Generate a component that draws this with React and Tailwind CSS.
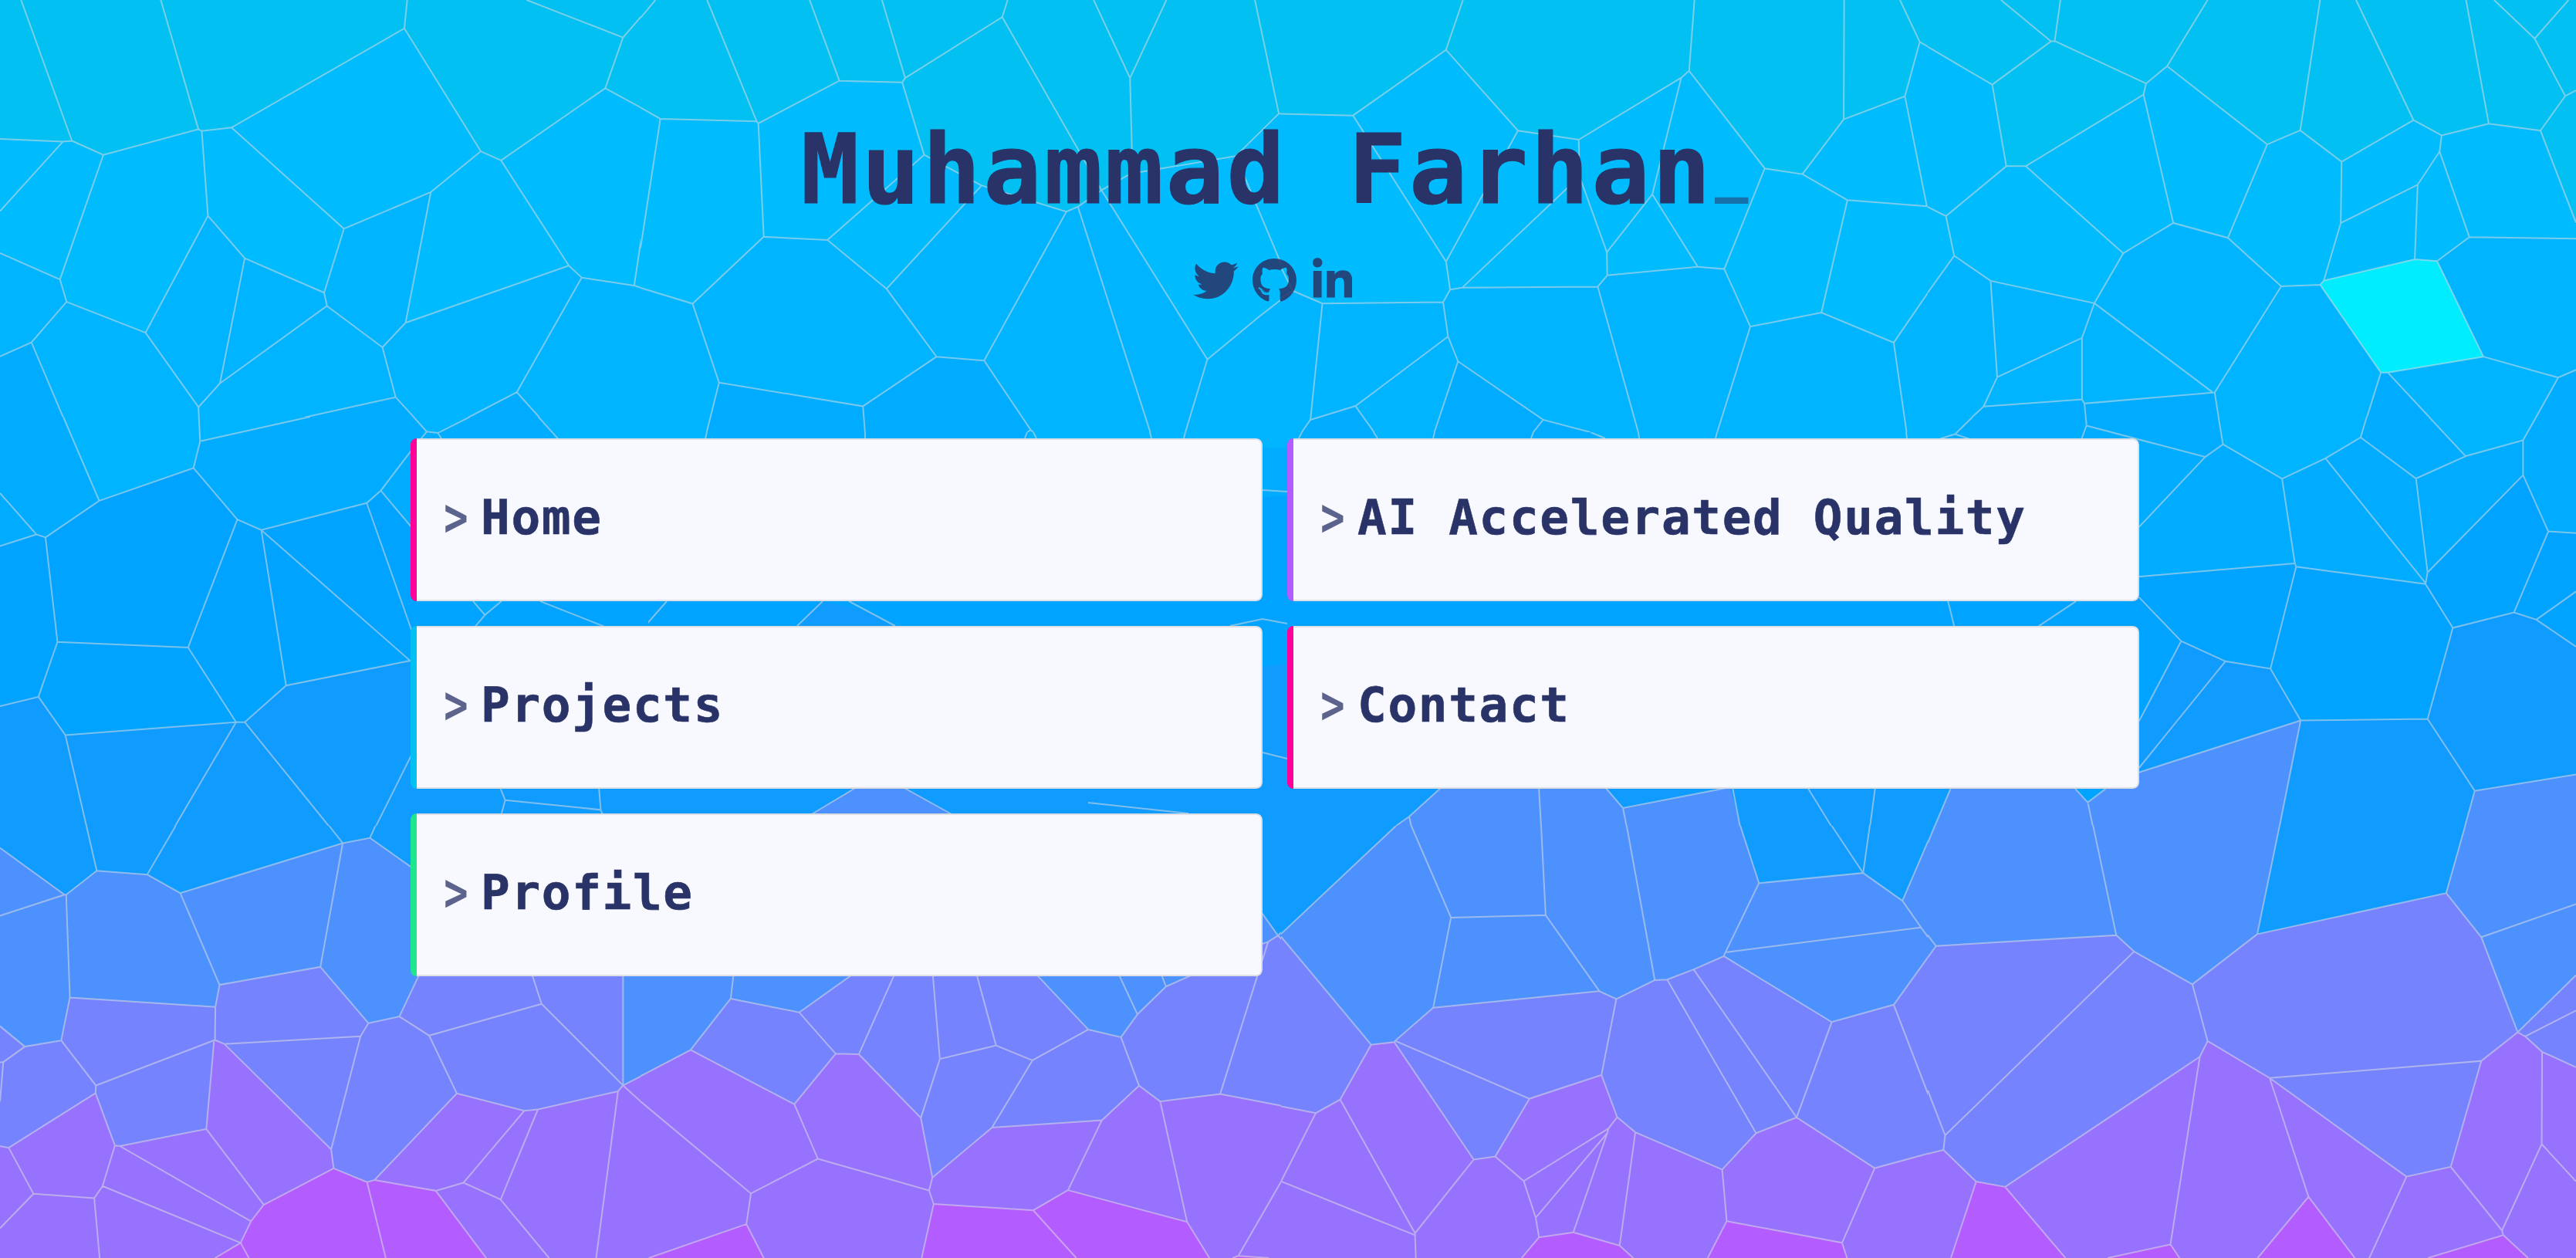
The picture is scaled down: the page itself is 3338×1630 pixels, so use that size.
import React from "react";
import { FaTwitter, FaGithub, FaLinkedinIn } from "react-icons/fa";

const C = {
  c1: "#02c0f2",
  c2: "#00bbfd",
  c3: "#00b4ff",
  c4: "#00acff",
  c5: "#00a3ff",
  c6: "#109bff",
  c7: "#4d91ff",
  c8: "#7583ff",
  c9: "#9672ff",
  c10: "#b35cff",
  hi: "#00edff",
};

// Each tile of the mosaic: position, size, base colour, coloured regions, seams.
const TILES = [
  {
    x: 830, y: 540, w: 1668, h: 540, vb: "830 540 1668 540", base: "c3",
    fills: [
      ["c4", "830 580 2498 580 2498 720 830 720"],
      ["c4", "915 540 1334 540 1334 600 915 600"],
      ["c4", "1687 540 1780 540 1790 600 1680 600"],
      ["c4", "1859 540 2061 540 2085 600 1850 600"],
      ["c5", "830 700 1700 640 2498 700 2498 1080 830 1080"],
      ["c6", "830 920 1033 811 1064 779 1120 790 1160 811 1500 880 1668 860 1668 985 2498 960 2498 1080 830 1080"],
      ["c7", "1050 1056 1105 1022 1175 1022 1235 1056"],
      ["c7", "1809 1080 1809 1070 1826 1058 1868 1020 2080 1020 2103 1047 2242 1020 2255 1070 2257 1080"],
    ],
    lines: "M916 560 914 568M1121 560 1121 568M1331 560 1328 568M1339 560 1343 568M1490 560 1492 568M1536 560 1534 568M1687 560 1683 568M1780 560 1785 568M1859 560 1857 568M1987 560 1984 568M2061 560 2080 568M2123 560 2124 568M2225 560 2223 568M2470 560 2471 568M864 779 836 811M1066 779 1033 811M1100 779 1160 811M1636 635 1668 637M1594 811 1636 802 1668 808M1636 975 1668 983M1050 1056 1110 1020M1170 1020 1235 1056M1410 1040 1540 1054M1809 1070 1826 1058 1868 1020M1826 1058 1829 1072M1994 1020 1997 1072M2080 1020 2103 1047 2242 1020M2103 1047 2108 1072M2245 1020 2255 1072M2342 1020 2374 1072M2430 1020 2423 1072",
  },
  {
    x: 0, y: 0, w: 840, h: 560, vb: "0 0 1568 1568", base: "c1",
    fills: [
      ["c2", "0 504 152 514 174 511 250 562 480 469 488 475 560 463 978 103 1163 549 1212 582 1464 320 1568 405 1568 1568 0 1568"],
      ["c3", "0 918 145 1014 161 1095 352 1207 503 783 592 937 784 1062 832 830 1042 697 981 1171 1376 964 1407 1007 1534 1036 1568 1052 1568 1568 0 1568"],
      ["c4", "0 1293 76 1242 168 1568 0 1568"],
      ["c4", "574 1568 957 1441 1032 1564 1064 1568 1250 1423 1337 1568"],
    ],
    lines: "M51 0 174 511 152 514 0 504M152 514 0 766M174 511 250 562 480 469 389 0M480 469 488 475 560 463 978 103 985 0M250 562 145 1014 0 918M145 1014 161 1095 76 1242 0 1293M76 1242 168 1568M161 1095 352 1207 503 783 488 475M352 1207 480 1477 483 1568M480 1477 532 1391 592 937 503 783M592 937 784 1062 832 830 560 463M784 1062 791 1110 532 1391M791 1110 925 1260 957 1441 574 1568M925 1260 981 1171 1042 697 832 830M1042 697 1163 549 978 103M1163 549 1212 582 1464 320 1507 136 1274 0M1507 136 1568 30M1464 320 1568 405M1212 582 1376 964 981 1171M1376 964 1407 1007 1534 1036 1568 695M1534 1036 1568 1052M1407 1007 1250 1423 1064 1568 1032 1564 957 1441M1250 1423 1337 1568",
  },
  {
    x: 830, y: 0, w: 840, h: 560, vb: "0 0 1568 1568", base: "c1",
    fills: [
      ["c2", "0 390 48 431 281 440 285 448 481 293 633 299 686 562 825 673 1030 768 1058 750 1115 690 1186 630 1400 574 1440 566 1544 412 1568 412 1568 1568 0 1568"],
      ["c3", "0 1044 126 1102 298 859 452 871 595 1048 825 673 1030 768 1058 750 1115 690 1371 1304 1568 1064 1568 1568 0 1568"],
      ["c4", "160 1568 190 1388 538 1474 716 1294 831 1308 944 1560 935 1568"],
    ],
    lines: "M0 65 36 0M161 0 281 440 48 431 0 390M48 431 0 900M281 440 285 448 481 293 409 0M481 293 633 299 640 283 584 0M640 283 875 62 888 0M875 62 1115 690M633 299 686 562 452 871 298 859 285 448M298 859 126 1102 0 1044M126 1102 190 1388 160 1568M190 1388 538 1474 543 1568M538 1474 716 1294 595 1048 452 871M716 1294 831 1308 1030 768 825 673 595 1048M686 562 825 673M831 1308 944 1560 935 1568M944 1560 950 1568M1030 768 1058 750 1233 1568M1058 750 1115 690 1371 1304 1318 1568M1115 690 1186 630 1440 566 1544 412 1568 412M1190 628 1184 283 1096 0M1184 283 1272 0M1544 412 1486 0M1440 566 1577 1055M1371 1304 1497 1148 1577 1055",
  },
  {
    x: 1660, y: 0, w: 840, h: 560, vb: "0 0 1568 1568", base: "c1",
    fills: [
      ["c2", "0 413 174 419 399 181 573 474 720 507 968 282 987 257 1170 611 1261 632 1361 433 1509 349 1545 152 1568 172 1568 1568 0 1568"],
      ["c3", "0 1082 28 1055 100 1101 392 1096 409 1051 438 1044 766 1040 789 999 1008 968 1072 976 1135 1185 1307 1134 1482 1243 1568 1060 1568 1568 0 1568"],
      ["c4", "50 1568 71 1523 180 1473 225 1568"],
      ["c4", "371 1568 428 1311 634 1523 748 1568"],
    ],
    lines: "M0 413 174 419 399 181 440 0M399 181 573 474 720 507 968 282 987 257 1000 0M987 257 1170 611 1261 632 1361 433 1362 0M1361 433 1509 349 1545 152 1497 0M1545 152 1568 172M174 419 399 949 409 1051 392 1096 404 1221 428 1311 634 1523 748 1568M573 474 399 949M438 1044 722 640 720 507M722 640 788 915 789 999 766 1040 438 1044 409 1051M968 282 898 705 788 915M898 705 1008 968 789 999M1008 968 1072 976 1170 611M1261 632 1370 726 1307 1134M1370 726 1562 748 1568 753M1509 349 1562 748M1072 976 1135 1185 1307 1134 1482 1243 1568 1055M0 970 28 1055 0 1082M28 1055 100 1101 392 1096M100 1101 71 1523 50 1568M404 1221 180 1473 71 1523M180 1473 225 1568M428 1311 371 1568M634 1523 610 1568M766 1040 864 1568M1135 1185 1055 1568M1482 1243 1513 1568",
  },
  {
    x: 2498, y: 0, w: 840, h: 560, vb: "0 0 1568 1568", base: "c1",
    fills: [
      ["c2", "0 170 156 307 190 603 237 603 522 343 528 303 579 240 821 524 901 473 1001 587 1175 436 1243 491 1357 449 1482 474 1568 808 1568 1568 0 1568"],
      ["c3", "0 1062 64 928 152 1019 403 1100 473 919 594 809 726 863 855 1039 949 1033 958 1018 1178 941 1232 947 1310 860 1568 866 1568 1568 0 1568"],
      ["c4", "68 1568 135 1475 373 1449 379 1464 694 1424 709 1568"],
      ["c4", "1051 1568 1096 1352 1113 1352 1247 1568"],
      ["c4", "1451 1568 1525 1370 1568 1342 1568 1568"],
      ["hi", "949 1033 958 1018 1178 941 1232 947 1344 1294 1113 1352 1096 1352"],
    ],
    lines: "M0 170 156 307 190 603 237 603 522 343 528 303 579 240 821 524 901 473 1001 587 1175 436 1243 491 1357 449 1482 474 1568 808M177 0 298 150 307 149 321 0M298 150 156 307M307 149 528 303M579 240 677 0M901 473 949 0M1036 0 1175 436M1302 0 1357 449M1370 0 1468 140 1550 0M1468 140 1542 348 1482 474M1542 348 1568 328M0 751 44 784 190 603M44 784 64 928M237 603 473 919M522 343 594 809M821 524 726 863M1001 587 999 809 958 1018M999 809 1185 670 1178 941M1185 670 1238 550 1243 491M1238 550 1310 860M0 1062 64 928 152 1019 403 1100 473 919 594 809 726 863 855 1039 949 1033 958 1018 1178 941 1232 947 1310 860 1568 866M152 1019 168 1368 135 1475M403 1100 373 1226 168 1368M373 1226 373 1449M403 1100 688 1422M855 1039 694 1424M68 1568 135 1475 373 1449 379 1464 694 1424 709 1568M379 1464 384 1543 452 1568M384 1543 377 1568M949 1033 1096 1352 1113 1352 1344 1294 1232 947M1096 1352 1051 1568M1113 1352 1247 1568M1344 1294 1525 1370 1568 1342M1525 1370 1451 1568",
  },
  {
    x: 0, y: 540, w: 840, h: 560, vb: "0 0 1568 1568", base: "c4",
    fills: [
      ["c3", "153 0 240 305 468 186 484 89 750 0"],
      ["c3", "1000 0 1032 54 1059 59 1137 0"],
      ["c3", "1302 0 1350 80 1568 80 1568 0"],
      ["c5", "0 469 88 427 110 438 240 305 468 186 574 373 632 411 887 313 921 268 995 400 1568 400 1568 1568 0 1568"],
      ["c4", "1144 669 1173 719 1213 669"],
      ["c6", "0 1050 93 1016 158 1155 571 1108 592 1108 692 975 992 885 1568 900 1568 1568 0 1568"],
      ["c7", "790 1568 829 1547 895 1528 934 1568"],
    ],
    lines: "M153 0 240 305 110 438 88 427 0 277M88 427 0 469M481 0 484 89 468 186 240 305M484 89 750 0M468 186 574 373 632 411 887 313 921 268 995 122M1000 0 1032 54 1059 59 1137 0M1032 54 1018 80M1059 59 1068 80M1302 0 1350 80M921 268 995 400M887 313 995 772M632 411 992 885 692 975 632 411M574 373 455 837 139 817 110 438M139 817 93 1016 0 1050M93 1016 158 1155 222 1568M158 1155 571 1108 455 837M571 1108 592 1108 692 975M571 1108 391 1568M592 1108 829 1547 790 1568M829 1547 827 1568M829 1547 895 1528 995 1228M895 1528 934 1568M1144 669 1173 719 1213 669M1173 719 1150 760M1306 669 1460 760M1211 1350 1222 1391 1213 1440M1222 1391 1453 1426 1449 1350M1453 1426 1457 1440",
  },
  {
    x: 2498, y: 540, w: 840, h: 560, vb: "0 0 1568 1568", base: "c4",
    fills: [
      ["c3", "0 0 109 0 66 63 30 80 0 80"],
      ["c3", "703 0 714 100 857 225 962 151 1047 75 1062 0"],
      ["c3", "1212 0 1301 143 1440 85 1472 0"],
      ["c5", "0 580 511 580 888 532 891 544 1204 607 1209 565 1440 212 1501 416 1568 422 1568 1568 0 1568"],
      ["c6", "511 1105 613 814 720 887 829 914 902 1102 1209 1096 1270 766 1418 710 1472 736 1568 834 1568 1568 511 1568"],
      ["c6", "0 1340 60 1340 0 1560"],
      ["c7", "0 1545 58 1340 352 1340 387 1399 440 1340 511 1290 902 1102 840 1568 0 1568"],
      ["c7", "1323 1357 1568 1298 1568 1568 1284 1568"],
    ],
    lines: "M109 0 66 63 30 80M66 63 100 80M382 0 384 32 372 80M384 32 671 146 511 400M671 146 714 100 703 0M714 100 857 225 962 151 1047 75 1062 0M962 151 1204 603M1047 75 1181 224 1301 143 1212 0M1301 143 1440 85 1472 0M1440 85 1440 212 1209 565 1181 224M1209 565 1204 607 1270 766 1418 710 1472 736 1568 834M1472 736 1568 634M1418 710 1501 416 1568 422M1501 416 1440 212M857 225 888 532 891 544 1204 607M511 580 888 532M891 544 829 914 720 887 613 814 511 655M613 814 511 1105M720 887 511 1274M829 914 902 1102 1209 1096 1270 766M1209 1096 1323 1357 1568 1298M1323 1357 1284 1568M902 1102 840 1568M902 1102 511 1290M49 669 64 760M359 669 268 760M55 1350 0 1545M357 1350 387 1399 430 1350M387 1399 411 1568",
  },
  {
    x: 0, y: 1070, w: 840, h: 560, vb: "0 0 1568 1568", base: "c7",
    fills: [
      ["c6", "0 80 160 250 234 163 356 177 436 244 829 63 895 44 995 150 995 0 0 0"],
      ["c8", "0 727 60 801 148 779 169 623 521 657 531 577 775 512 891 716 966 692 1016 530 1507 530 1507 942 1568 895 1568 1568 0 1568"],
      ["c9", "0 1162 21 1168 231 970 278 1160 290 1162 499 1100 518 777 543 792 801 1174 807 1243 888 1293 906 1285 1105 971 1268 1034 1301 1029 1495 963 1507 942 1568 895 1568 1568 0 1568"],
      ["c10", "520 1568 582 1513 607 1435 638 1375 807 1243 888 1293 906 1285 1054 1324 1176 1568"],
    ],
    lines: "M0 80 156 250 0 326M156 250 160 250 234 163 209 0M234 163 356 177 425 0M356 177 436 244 829 63 796 0M829 63 895 44 908 0M895 44 995 150M829 63 775 512 531 577 436 244M160 250 169 623 521 657 531 577M169 623 148 779 60 801 0 727M60 801 8 857 0 1000M8 857 0 858M148 779 232 942 520 777 521 657M232 942 231 970 21 1168 0 1162M21 1168 81 1335 0 1460M81 1335 228 1351 248 1307 278 1160 231 970M228 1351 241 1568M248 1307 582 1513 520 1568M582 1513 602 1568M278 1160 290 1162 499 1100 518 777M520 777 543 792 872 764 891 716 775 512M290 1162 607 1435 582 1513M499 1100 638 1375 607 1435M543 792 801 1174 872 764M801 1174 807 1243 638 1375M807 1243 888 1293 906 1285 1105 971 1038 761 966 692 891 716M966 692 1014 540M1038 761 1310 646 1287 540M1310 646 1507 942 1507 540M1507 942 1568 895M1507 942 1568 1025M1507 942 1495 963 1442 1568M1495 963 1301 1029 1268 1034 1105 971M1301 1029 1211 1356 1121 1295 1268 1034M1121 1295 1054 1324 906 1285M1054 1324 1176 1568M1211 1356 1328 1568M888 1293 933 1568",
  },
  {
    x: 830, y: 1070, w: 840, h: 560, vb: "0 0 1568 1568", base: "c8",
    fills: [
      ["c7", "0 908 121 813 218 627 384 677 521 530 0 530"],
      ["c7", "950 530 1083 739 1162 767 1202 684 1271 583 1350 530"],
      ["c6", "1490 0 1568 0 1568 360 1542 398 1505 320 1490 320"],
      ["c7", "1490 300 1505 320 1542 398 1490 440"],
      ["c7", "1542 398 1568 360 1568 442"],
      ["c9", "0 908 121 813 372 1010 472 827 528 829 678 1060 706 1276 850 1095 1116 1068 1206 943 1257 1000 1402 973 1568 1021 1568 1568 0 1568"],
      ["c10", "20 1568 256 1445 298 1568"],
      ["c10", "680 1568 709 1372 950 1395 1034 1322 1322 1437 1376 1568"],
      ["c10", "1432 1568 1446 1560 1520 1568"],
    ],
    lines: "M0 908 121 813 218 627 225 540M218 627 384 677 512 540M384 677 472 827 528 829 614 540M121 813 372 1010 472 827M372 1010 429 1208 267 1334 0 1000M267 1334 256 1445 20 1568M256 1445 298 1568M429 1208 698 1323 709 1372 680 1568M528 829 678 1060 706 1276 698 1323M678 1060 724 846 707 540M724 846 860 797 813 540M860 797 948 851 850 1095 706 1276M948 851 1083 739 958 540M1083 739 1162 767 1202 684 1157 540M1202 684 1271 583 1260 540M1271 583 1336 540M1162 767 1206 943 1116 1068 850 1095M1206 943 1257 1000 1402 973 1518 421M1402 973 1568 1021M1116 1068 1034 1322 950 1395 709 1372M950 1395 1054 1568M1034 1322 1322 1437 1257 1000M1322 1437 1376 1568M1568 1230 1549 1292 1568 1302M1549 1292 1446 1560 1432 1568M1446 1560 1520 1568M1500 310 1542 398 1568 360M1542 398 1568 442M1542 398 1518 421 1500 430",
  },
  {
    x: 1660, y: 1070, w: 840, h: 560, vb: "0 0 1568 1568", base: "c8",
    fills: [
      ["c6", "0 0 278 0 0 392"],
      ["c7", "0 392 278 0 1568 0 1568 470 1482 649 1332 712 1071 473 998 521 934 558 904 560 811 628 770 600 368 660 276 780 218 794 0 402"],
      ["c6", "1111 0 1156 208 1408 171 1503 272 1568 45 1568 0"],
      ["c9", "0 1018 84 1042 143 993 218 794 274 785 466 1211 518 1200 601 990 775 904 813 1057 857 1112 1067 1247 1149 1115 1247 1058 1436 1242 1568 1188 1568 1568 0 1568"],
      ["c10", "582 1568 624 1493 707 1475 819 1523 852 1568"],
      ["c10", "1032 1568 1078 1434 1357 1513 1369 1568"],
    ],
    lines: "M278 0 0 392M0 402 218 794 143 993 84 1042 0 1018M218 794 274 785 276 780 368 660 411 333 315 0M411 333 640 324 629 0M640 324 770 600 368 660M770 600 811 628 904 560 836 0M904 560 934 558 998 521 1071 473 1075 459 1156 208 1111 0M1156 208 1408 171 1332 0M1408 171 1424 0M1408 171 1503 272 1568 45M1503 272 1548 369 1075 459M1548 369 1568 410M1071 473 1332 712 1482 649 1568 470M1482 649 1568 985M1332 712 1247 1058 998 521M934 558 1149 1115 1247 1058 1436 1242 1568 1188M1149 1115 1067 1247 857 1112 813 1057 775 904 811 628M775 904 601 990 276 780M274 785 466 1211 518 1200 601 990M466 1211 324 1478 143 993M84 1042 0 1290 324 1485 324 1478M324 1485 326 1568M518 1200 587 1289 792 1098 813 1057M587 1289 616 1422 789 1115 792 1098M616 1422 624 1493 582 1568M624 1493 707 1475 789 1115M707 1475 819 1523 857 1112M819 1523 852 1568M1067 1247 1078 1434 1032 1568M1078 1434 1357 1513 1436 1242M1357 1513 1369 1568",
  },
  {
    x: 2498, y: 1070, w: 840, h: 560, vb: "0 0 1568 1568", base: "c8",
    fills: [
      ["c7", "0 0 851 0 797 393 640 575 499 456 456 397 20 436 0 478"],
      ["c6", "851 0 1300 0 1254 244 797 393"],
      ["c6", "0 0 17 0 0 62"],
      ["c7", "1300 0 1568 0 1568 542 1427 749 1339 404 1254 244"],
      ["c9", "0 1190 38 1176 117 1291 187 1310 658 838 677 781 827 915 1158 1273 1265 1237 1339 853 1427 749 1445 764 1486 820 1568 876 1568 1568 0 1568"],
      ["c10", "56 1568 117 1291 187 1310 333 1568"],
      ["c10", "435 1568 587 1519 609 1568"],
      ["c10", "798 1568 921 1346 1033 1568"],
      ["c10", "1210 1568 1392 1485 1452 1568"],
    ],
    lines: "M17 0 0 62M0 397 20 436 0 478M20 436 456 397 400 0M456 397 499 456 42 1123 0 960M42 1123 38 1176 0 1190M38 1176 117 1291 56 1568M117 1291 187 1310 333 1568M187 1310 658 838 587 1519 435 1568M587 1519 609 1568M658 838 677 781 640 575 499 456M640 575 797 393 851 0M797 393 1254 244 1300 0M1254 244 1339 404 1568 284M1339 404 1427 749 1568 542M1427 749 1445 764 1568 670M1445 764 1486 820 1568 876M1486 820 1485 1155 1568 1290M1485 1155 1389 1468 1265 1237 1158 1273 1068 1568M1389 1468 1392 1485 1210 1568M1392 1485 1452 1568M1265 1237 1339 853 827 915 677 781M1339 853 1427 749M827 915 1158 1273M827 915 921 1346 798 1568M921 1346 1033 1568",
  },
];

function Mosaic() {
  return (
    <svg className="absolute inset-0 h-full w-full" viewBox="0 0 3338 1630" preserveAspectRatio="none" aria-hidden="true">
      {TILES.map((t) => (
        <svg key={t.x + "-" + t.y} x={t.x} y={t.y} width={t.w} height={t.h} viewBox={t.vb} preserveAspectRatio="none">
          <rect x="0" y="0" width="3338" height="1630" fill={C[t.base]} />
          {t.fills.map(([c, p], i) => (
            <polygon key={i} points={p} fill={C[c]} />
          ))}
          <path d={t.lines} fill="none" stroke="#dddddd" strokeOpacity="0.55" strokeWidth="2" vectorEffect="non-scaling-stroke" />
        </svg>
      ))}
    </svg>
  );
}

const LINKS = [
  { label: "Home", bar: "bg-[#ff0099]" },
  { label: "AI Accelerated Quality", bar: "bg-[#b35cff]" },
  { label: "Projects", bar: "bg-[#02c0f2]" },
  { label: "Contact", bar: "bg-[#ff0099]" },
  { label: "Profile", bar: "bg-[#1ee68f]" },
];

function LinkCard({ label, bar }) {
  return (
    <a href="#" className="flex h-[211px] overflow-hidden rounded-lg">
      <span className={"w-2 shrink-0 " + bar} />
      <span className="flex grow items-center rounded-r-lg border-y-2 border-r-2 border-[#dddfe4] bg-[#f8f9ff] pb-[3px] pl-[35px] text-[62.7px] leading-none font-bold tracking-[1.65px] text-[#293367]">
        <span className="w-[48px] shrink-0 origin-left scale-x-[.84] scale-y-[1.1] opacity-75">&gt;</span>
        <span className="whitespace-nowrap [-webkit-text-stroke:0.6px_#293367]">{label}</span>
      </span>
    </a>
  );
}

export default function App() {
  return (
    <div className="relative h-[1630px] w-full overflow-hidden bg-[#00b4ff] font-['DejaVu_Sans_Mono',monospace]">
      <Mosaic />
      <main className="relative ml-[532px] w-[2240px] pt-[157px]">
        <h1 className="flex justify-center text-[125px] leading-none font-bold tracking-[3.55px] whitespace-pre text-[#293367]">
          <span className="[-webkit-text-stroke:1.2px_#293367]">Muhammad Farhan</span>
          <span className="w-[46px] origin-[0_106px] translate-x-[2px] translate-y-[3px] scale-y-[1.23] text-[72px] leading-[125px] tracking-normal opacity-55">_</span>
        </h1>
        <nav className="ml-[1014px] mt-[52px] flex text-[#293367] opacity-85">
          <FaTwitter className="h-[58.8px] w-[58.8px]" />
          <FaGithub className="ml-[18px] h-[58.8px] w-[57px]" />
          <FaLinkedinIn className="ml-[21px] h-[58.8px] w-[51.5px]" />
        </nav>
        <div className="mt-[175px] grid grid-cols-2 gap-8">
          {LINKS.map((l) => (
            <LinkCard key={l.label} {...l} />
          ))}
        </div>
      </main>
    </div>
  );
}
